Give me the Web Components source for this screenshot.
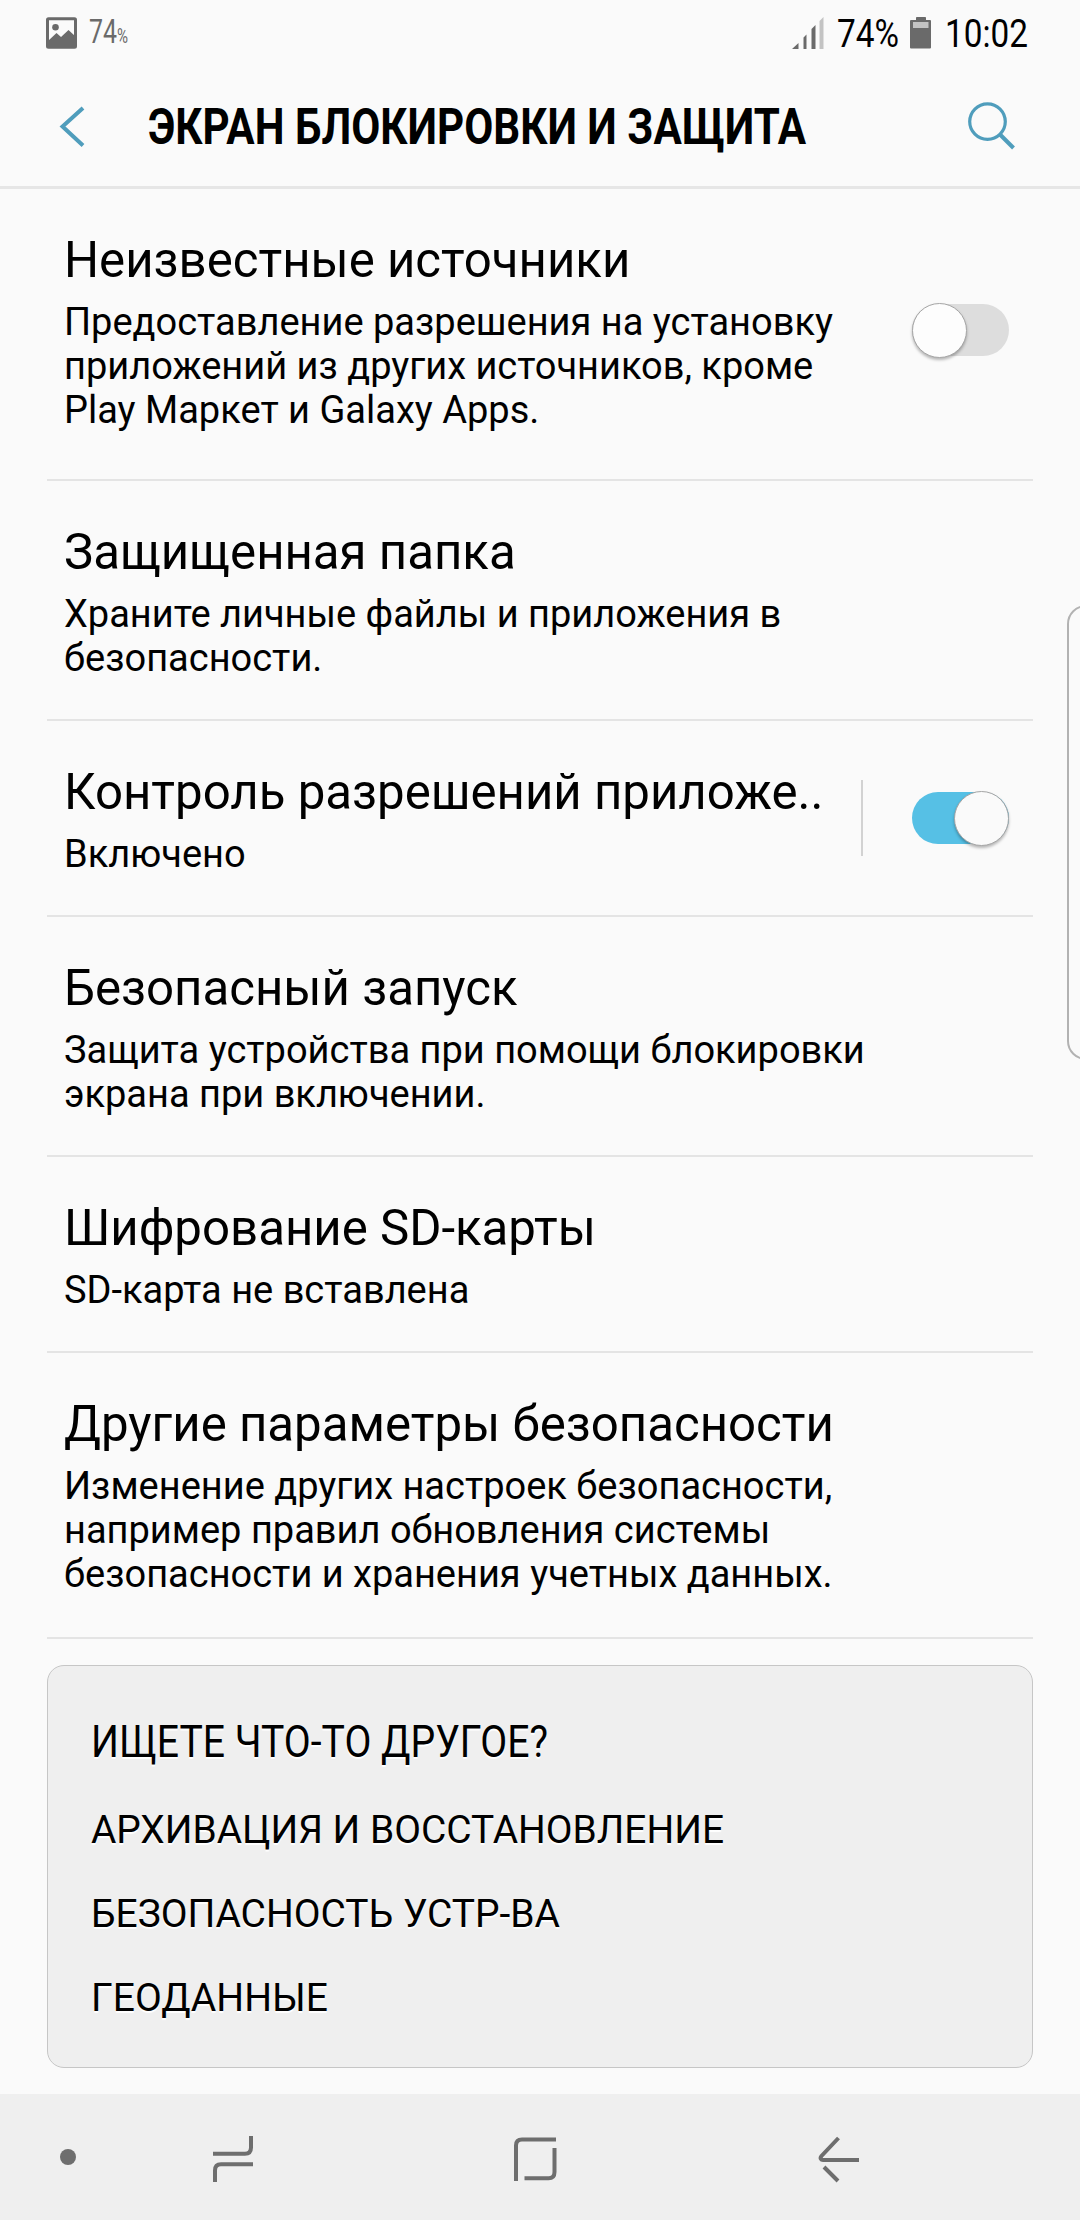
<!DOCTYPE html>
<html lang="ru">
<head>
<meta charset="utf-8">
<title>Экран блокировки и защита</title>
<style>
html,body{margin:0;padding:0;background:#fafafa}
body{font-family:Roboto,"Noto Sans",sans-serif;color:#000}
</style>
</head>
<body>
<settings-screen></settings-screen>
<script>
const define=(name,html,init)=>customElements.define(name,class extends HTMLElement{
  connectedCallback(){
    if(this.shadowRoot)return;
    this.attachShadow({mode:'open'}).innerHTML=html;
    if(init)init.call(this,this.shadowRoot);
  }
});

/* One line of text squeezed horizontally to the width in its "w" attribute */
define('fit-text',`<style>:host{display:block;white-space:nowrap;overflow:visible}
span{display:inline-block;transform-origin:0 50%}</style><span><slot></slot></span>`,function(root){
  const s=root.querySelector('span'),w=+this.getAttribute('w');
  this.style.width=w+'px';
  s.style.transform=`scaleX(${w/s.getBoundingClientRect().width})`;
});

define('status-bar',`<style>
:host{display:flex;height:66px;box-sizing:border-box;padding:0 52px 0 46px;align-items:flex-start}
svg{display:block;flex:none}
.pic{margin-top:17px}
.small{font-size:33px;line-height:36px;color:#6a6a6a;font-weight:400;margin:14px 0 0 12px;display:flex}
.pct{font-size:20px;line-height:20px;margin:12px 0 0 0}
.right{margin-left:auto;display:flex;font-size:39px;line-height:46px}
fit-text{margin-top:11px}
</style>
<svg class="pic" width="31" height="32"><rect x="1.5" y="1.8" width="28" height="28.4" rx="1" fill="none" stroke="#6a6a6a" stroke-width="3"/><circle cx="9.5" cy="10.3" r="3.3" fill="#6a6a6a"/><path d="M2 24 10.5 16 15 20 22.500 13 29 19V30H2z" fill="#6a6a6a"/></svg>
<div class="small"><fit-text w="28" style="margin:0">74</fit-text><fit-text class="pct" w="11">%</fit-text></div>
<div class="right">
<svg width="32" height="32" style="margin:17px 13px 0 0"><path d="M0 32 6.500 26V32zM11.500 20.500 14.500 17.500V32H11.500zM19.500 12 23.500 8V32H19.500z" fill="#6a6a6a"/><path d="M27.500 4 31.500 0V32H27.500z" fill="#c3c3c3"/></svg>
<fit-text w="62">74%</fit-text>
<svg width="22" height="34" style="margin:16px 13px 0 11px"><path d="M6 4V1.500Q6 1 7 1H15Q16 1 16 1.500V4H20Q21 4 21 5V31.500Q21 32.500 20 32.500H1Q0 32.500 0 31.500V5Q0 4 1 4z" fill="#6a6a6a"/><path d="M3 6H18.500V12H3z" fill="#c3c3c3"/></svg>
<fit-text w="83">10:02</fit-text></div>`);

define('app-header',`<style>
:host{display:flex;height:123px;box-sizing:border-box;border-bottom:3px solid #e6e6e6;padding:0 64px 0 58px;align-items:flex-start}
svg{display:block;flex:none}
fit-text{font-weight:700;font-size:49.500px;line-height:58px;margin:32px 0 0 62px}
.find{margin:36px 0 0 auto}
</style>
<svg width="28" height="44" style="margin-top:39px"><path d="M25 3 4.500 21.500 25 40.500" fill="none" stroke="#4f9dbc" stroke-width="4"/></svg>
<fit-text w="658"><slot></slot></fit-text>
<svg class="find" width="50" height="50"><circle cx="21.500" cy="19.600" r="17.800" fill="none" stroke="#4f9dbc" stroke-width="3.200"/><path d="M34 32.500 47.500 46" stroke="#4f9dbc" stroke-width="4"/></svg>`);

define('toggle-switch',`<style>
:host{display:flex;box-sizing:border-box;width:97px;height:52px;border-radius:26px;background:#ddd;flex:none;align-items:center}
:host([on]){background:#56c0e5;justify-content:flex-end}
i{display:block;width:55px;height:55px;border-radius:50%;background:#fdfdfd;box-sizing:border-box;border:1px solid #a6a6a6;box-shadow:0 2px 3px rgba(0,0,0,.28);flex:none}
:host([on]) i{background:#fafafa}
</style><i></i>`);

define('setting-row',`<style>
:host{display:flex;box-sizing:border-box;margin:0 47px;padding:42px 24px var(--pb,39px) 17px;border-bottom:2px solid #e4e4e4}
.t{font-size:49.200px;line-height:58px;white-space:nowrap}
.d{font-size:38px;line-height:44px;margin-top:11px;white-space:nowrap}
::slotted([slot=end]){margin-left:auto;align-self:flex-start}
</style><div><div class="t"><slot name="title"></slot></div><div class="d"><slot></slot></div></div><slot name="end"></slot>`);

define('switch-cell',`<style>
:host{display:flex;align-items:center}
:host([divided]){border-left:2px solid #d2d2d2;padding-left:49px;height:76px}
</style><slot></slot>`);

define('related-card',`<style>
:host{display:flex;flex-direction:column;box-sizing:border-box;margin:26px 47px 26px;height:403px;padding:50px 44px 0 43px;background:#efefef;border:1px solid #c6c6c6;border-radius:17px;text-shadow:0 2px 1px #fff}
.h{font-size:45px;line-height:52px}
::slotted(fit-text){font-size:39px;line-height:84px}
.items{margin-top:20px}
</style><fit-text class="h" w="457"><slot name="title"></slot></fit-text><div class="items"><slot></slot></div>`);

define('nav-bar',`<style>
:host{display:flex;height:126px;background:#efefef;padding-left:60px;box-sizing:border-box;align-items:flex-start}
svg{display:block;flex:none;fill:none;stroke:#6e6e6e;stroke-width:4}
</style>
<svg width="16" height="18" style="margin-top:54px"><ellipse cx="8" cy="9" rx="8" ry="8" fill="#6e6e6e" stroke="none"/></svg>
<svg width="40" height="46" style="margin:42px 0 0 137px"><path d="M0 17.700H32Q38 17.700 38 11.500V0M40 28.200H8Q2 28.200 2 34.400V46"/></svg>
<svg width="43" height="44" style="margin:43px 0 0 261px"><path d="M2 44V8.500Q2 2.500 8 2.500H42M40.500 11V35Q40.500 41.300 34.500 41.300H10.500"/></svg>
<svg width="42" height="48" style="margin:41px 0 0 261px"><path d="M20.500 3 3.500 21Q2 23 3 24Q3.500 25 5 25H41M6 32 20 46"/></svg>`);

define('edge-handle',`<style>
:host{position:absolute;left:1067px;top:605px;width:13px;height:455px;overflow:hidden;display:block}
i{display:block;box-sizing:border-box;width:60px;height:455px;border:2px solid #b2b2b2;border-radius:19px}
</style><i></i>`);

define('settings-screen',`<style>:host{display:block;position:relative;width:1080px;height:2220px;overflow:hidden;background:#fafafa}</style>
<status-bar></status-bar>
<app-header>ЭКРАН БЛОКИРОВКИ И ЗАЩИТА</app-header>
<setting-row style="--pb:47px"><span slot="title">Неизвестные источники</span>Предоставление разрешения на установку<br>приложений из других источников, кроме<br>Play Маркет и Galaxy Apps.<switch-cell slot="end" style="margin-top:73px"><toggle-switch></toggle-switch></switch-cell></setting-row>
<setting-row><span slot="title">Защищенная папка</span>Храните личные файлы и приложения в<br>безопасности.</setting-row>
<setting-row><span slot="title">Контроль разрешений приложе..</span>Включено<switch-cell slot="end" divided style="margin-top:17px"><toggle-switch on></toggle-switch></switch-cell></setting-row>
<setting-row><span slot="title">Безопасный запуск</span>Защита устройства при помощи блокировки<br>экрана при включении.</setting-row>
<setting-row><span slot="title">Шифрование SD-карты</span>SD-карта не вставлена</setting-row>
<setting-row style="--pb:41px"><span slot="title">Другие параметры безопасности</span>Изменение других настроек безопасности,<br>например правил обновления системы<br>безопасности и хранения учетных данных.</setting-row>
<related-card><span slot="title">ИЩЕТЕ ЧТО-ТО ДРУГОЕ?</span><fit-text w="633">АРХИВАЦИЯ И ВОССТАНОВЛЕНИЕ</fit-text><fit-text w="469">БЕЗОПАСНОСТЬ УСТР-ВА</fit-text><fit-text w="237">ГЕОДАННЫЕ</fit-text></related-card>
<nav-bar></nav-bar>
<edge-handle></edge-handle>`);
</script>
</body>
</html>
